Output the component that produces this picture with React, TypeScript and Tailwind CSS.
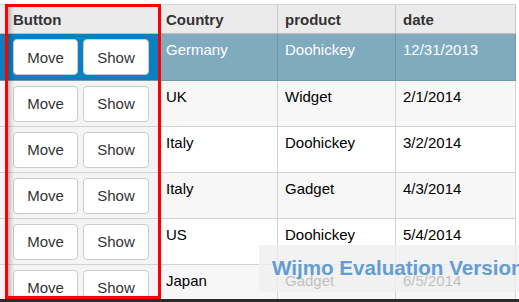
import React from "react";

const rows = [
  { c: "Germany", p: "Doohickey", d: "12/31/2013" },
  { c: "UK", p: "Widget", d: "2/1/2014" },
  { c: "Italy", p: "Doohickey", d: "3/2/2014" },
  { c: "Italy", p: "Gadget", d: "4/3/2014" },
  { c: "US", p: "Doohickey", d: "5/4/2014" },
  { c: "Japan", p: "Gadget", d: "6/5/2014" },
];

function Btn({ label, w }: { label: string; w: string }) {
  return (
    <div
      className={`${w} h-[36px] shrink-0 flex items-center justify-center bg-white border border-[#cccccc] rounded-[4px] text-[15px] text-[#333333]`}
    >
      {label}
    </div>
  );
}

export default function App() {
  return (
    <div
      className="relative w-[519px] h-[302px] bg-white overflow-hidden flex flex-col"
      style={{ fontFamily: '"Liberation Sans", Arial, sans-serif' }}
    >
      <div className="h-[4px] shrink-0" />
      <div className="flex-1 overflow-hidden w-[516px] border-t border-[#d4d4d4]">
        {/* header */}
        <div className="flex h-[29px] bg-[#ebebeb] border-b border-[#bdbdbd] text-[15px] font-bold text-[#333333] leading-[17px]">
          <div className="w-[161px] shrink-0 border-r border-[#c8c8c8] pl-[13px] pt-[6px]">Button</div>
          <div className="w-[117px] shrink-0 border-r border-[#c8c8c8] pl-[5px] pt-[6px]">Country</div>
          <div className="w-[118px] shrink-0 border-r border-[#c8c8c8] pl-[7px] pt-[6px]">product</div>
          <div className="w-[120px] shrink-0 border-r border-[#c8c8c8] pl-[7px] pt-[6px]">date</div>
        </div>
        {rows.map((r, i) => {
          const sel = i === 0;
          const alt = i % 2 === 1;
          const cellBg = sel ? "bg-[#80abbf] text-white" : alt ? "bg-[#f7f7f7] text-black" : "bg-white text-black";
          const bd = sel ? "border-[#6f98ab]" : "border-[#d2d2d2]";
          return (
            <div
              key={i}
              className={`flex ${sel ? "h-[47px]" : "h-[46px]"} border-b ${bd} text-[15px] leading-[17px]`}
            >
              <div
                className={`w-[161px] shrink-0 border-r ${bd} ${sel ? "bg-[#0b80c1]" : "bg-[#f4f4f4]"} flex items-center gap-[5px] pl-[13px]`}
              >
                <Btn label="Move" w="w-[65px]" />
                <Btn label="Show" w="w-[66px]" />
              </div>
              <div className={`w-[117px] shrink-0 border-r ${bd} ${cellBg} pl-[5px] pt-[7px]`}>{r.c}</div>
              <div className={`w-[118px] shrink-0 border-r ${bd} ${cellBg} pl-[7px] pt-[7px]`}>{r.p}</div>
              <div className={`w-[120px] shrink-0 border-r ${bd} ${cellBg} pl-[7px] pt-[7px]`}>{r.d}</div>
            </div>
          );
        })}
      </div>
      <div className="h-[3px] shrink-0 bg-[#2b2b2b]" />

      {/* red highlight annotation */}
      <div className="absolute left-[5px] top-[4px] w-[156px] h-[295px] border-[3px] border-[#ff0000] shadow-[inset_5px_0_5px_-3px_rgba(0,0,0,0.3)] pointer-events-none" />

      {/* watermark */}
      <div className="absolute left-[259px] top-[245px] w-[280px] h-[47px] bg-[#efefef]/80 flex items-center pl-[13px] whitespace-nowrap">
        <span className="text-[20.6px] font-bold text-[#639dd4]">Wijmo Evaluation Version</span>
      </div>
    </div>
  );
}
